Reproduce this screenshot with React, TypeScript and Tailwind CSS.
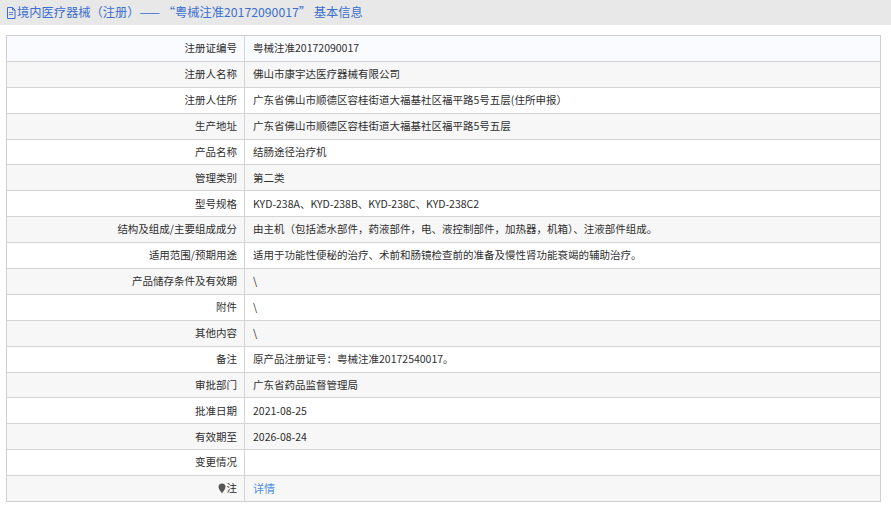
import React from "react";

const rows: [string, string][] = [
  ["注册证编号", "粤械注准20172090017"],
  ["注册人名称", "佛山市康宇达医疗器械有限公司"],
  ["注册人住所", "广东省佛山市顺德区容桂街道大福基社区福平路5号五层(住所申报）"],
  ["生产地址", "广东省佛山市顺德区容桂街道大福基社区福平路5号五层"],
  ["产品名称", "结肠途径治疗机"],
  ["管理类别", "第二类"],
  ["型号规格", "KYD-238A、KYD-238B、KYD-238C、KYD-238C2"],
  ["结构及组成/主要组成成分", "由主机（包括滤水部件，药液部件，电、液控制部件，加热器，机箱）、注液部件组成。"],
  ["适用范围/预期用途", "适用于功能性便秘的治疗、术前和肠镜检查前的准备及慢性肾功能衰竭的辅助治疗。"],
  ["产品储存条件及有效期", "\\"],
  ["附件", "\\"],
  ["其他内容", "\\"],
  ["备注", "原产品注册证号：粤械注准20172540017。"],
  ["审批部门", "广东省药品监督管理局"],
  ["批准日期", "2021-08-25"],
  ["有效期至", "2026-08-24"],
  ["变更情况", ""],
];

function DocIcon() {
  return (
    <svg width="10" height="12" viewBox="0 0 10 12" className="shrink-0">
      <path d="M1.5 0.5h5l2.5 2.5v8.5h-7.5z" fill="none" stroke="#3a6fd0" strokeWidth="1" />
      <path d="M6.5 0.5v2.5h2.5" fill="none" stroke="#3a6fd0" strokeWidth="1" />
      <path d="M3 5.5h4M3 7.5h4" stroke="#3a6fd0" strokeWidth="0.8" />
    </svg>
  );
}

function PinIcon() {
  return (
    <svg width="8" height="11" viewBox="0 0 8 11" className="mr-[1px]">
      <path d="M4 0.5a3.5 3.5 0 0 1 3.5 3.5c0 2.2-2.2 4-3.5 6.5C2.7 8 0.5 6.2 0.5 4A3.5 3.5 0 0 1 4 0.5z" fill="#555" />
    </svg>
  );
}

export default function App() {
  const font = { fontFamily: '"Noto Sans CJK SC", "Noto Sans", sans-serif' };
  return (
    <div className="w-[891px] h-[506px] bg-white text-[#2e2e2e]" style={font}>
      <div className="h-[25px] bg-[#e8e8e8] flex items-center pl-[6px] gap-[1px] text-[12.25px] text-[#3a6fd0] leading-none">
        <DocIcon />
        <span>境内医疗器械（注册）—— “粤械注准20172090017” 基本信息</span>
      </div>
      <div className="mt-[10px] ml-[6px] w-[875px] border border-[#cfcfcf] text-[10.5px] leading-none">
        {rows.map(([k, v], i) => (
          <div
            key={k}
            className={`flex h-[25.9px] border-b border-[#d4d4d4] ${
              i === 0 ? "bg-[#f9fbfe]" : i % 2 === 1 ? "bg-[#f7f7f7]" : "bg-white"
            }`}
          >
            <div className="w-[238px] shrink-0 border-r border-[#d4d4d4] flex items-center justify-end pr-[7px]">
              {k}
            </div>
            <div className="flex-1 flex items-center pl-[8px]">{v}</div>
          </div>
        ))}
        <div className="flex h-[25px] bg-[#f7f7f7]">
          <div className="w-[238px] shrink-0 border-r border-[#d4d4d4] flex items-center justify-end pr-[7px]">
            <PinIcon />注
          </div>
          <div className="flex-1 flex items-center pl-[8px]">
            <a className="text-[#4d8fe0] text-[11px]">详情</a>
          </div>
        </div>
      </div>
    </div>
  );
}
